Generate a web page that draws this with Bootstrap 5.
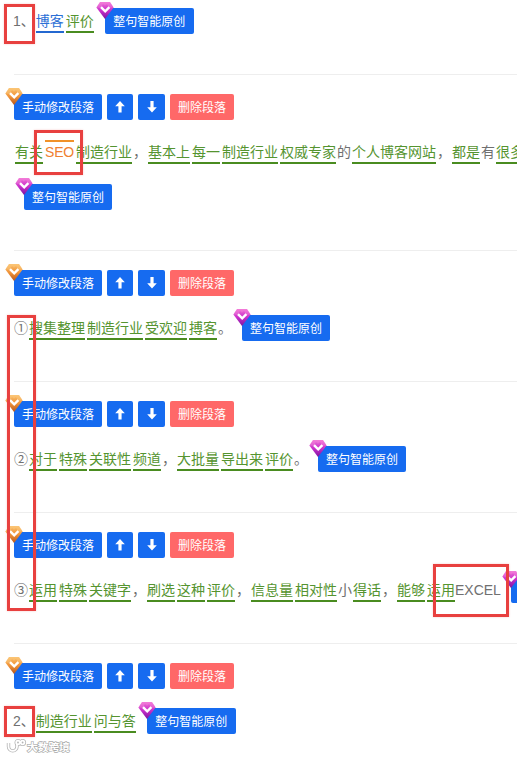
<!DOCTYPE html>
<html lang="zh-CN">
<head>
<meta charset="utf-8">
<meta name="viewport" content="width=device-width, initial-scale=1">
<title>段落编辑</title>
<link href="https://cdn.jsdelivr.net/npm/bootstrap@5.3.0/dist/css/bootstrap.min.css" rel="stylesheet">
<style>
body{width:517px;height:758px;font:400 14px/26px "Liberation Sans","Noto Sans CJK SC",sans-serif;color:#707070;background:#fff}
.para{padding:19px 0 40px;border-top:1px solid #eee;margin-left:14px}
.para.first{border-top:0;padding-top:8px}
.tools{gap:5px;margin-bottom:19px}
.line{height:26px;white-space:nowrap}
.line + .line{margin-top:19px}
.line > *{flex:none}
.num{margin-left:-1px}
.word{height:25px;margin:0 1px;color:#559430;border-bottom:2px solid #4a8c20}
.word.blue{color:#2b6fd6;border-color:#2468d0}
.word.orange{width:29px;letter-spacing:-.2px;color:#f08030;border:0;background:linear-gradient(#f0922a,#f0922a) 0 1px/100% 2px no-repeat}
.act{height:26px;padding:2px 8px 0;border:0;border-radius:2px;font-size:12px;line-height:24px;color:#fff;background:#166bf0}
.act:hover{color:#fff;background:#0d5fdd}
.act.del{background:#ff6868}
.act.arrow{width:26px;padding:0}
.act.arrow.down{width:27px}
.act.arrow svg{display:block;margin:auto}
.smart{margin-left:10px}
.num ~ .smart{width:89px}
.gem{left:-9px;top:-6px;width:18px;height:17px}
.frame{border:3px solid #e8403f;box-shadow:0 0 2px #e8403f44;pointer-events:none}
.f1{left:4px;top:4px;width:31px;height:40px}
.f2{left:34px;top:130px;width:49px;height:45px}
.f3{left:7px;top:315px;width:29px;height:296px}
.f4{left:433px;top:564px;width:76px;height:53px}
.f5{left:4px;top:706px;width:31px;height:31px}
.wm{left:6px;top:738px}
</style>
<script src="https://cdn.jsdelivr.net/npm/bootstrap@5.3.0/dist/js/bootstrap.bundle.min.js"></script>
</head>
<body class="position-relative overflow-hidden m-0">
<svg width="0" height="0" class="position-absolute">
  <defs>
    <linearGradient id="go" x2="0" y2="1"><stop stop-color="#f9bd68"/><stop offset=".5" stop-color="#f0943a"/><stop offset="1" stop-color="#b8561a"/></linearGradient>
    <linearGradient id="gp" x2="0" y2="1"><stop stop-color="#ee6fd4"/><stop offset=".5" stop-color="#c92fcb"/><stop offset="1" stop-color="#7a149f"/></linearGradient>
    <symbol id="gold" viewBox="0 0 18 17"><path d="M4 0h10l3.6 5.4L9 17 .4 5.4z" fill="url(#go)"/><path d="M4 0 .4 5.4l4.3.6L7 2l2 1.8L11 2l2.5 4 4.1-.6L14 0z" fill="#ffd28a" opacity=".4"/><path d="m5 5.2 4.2 4.2 4.2-4.2" fill="none" stroke="#fff" stroke-width="2.4"/></symbol>
    <symbol id="pink" viewBox="0 0 18 17"><path d="M4 0h10l3.6 5.4L9 17 .4 5.4z" fill="url(#gp)"/><path d="M4 0 .4 5.4l4.3.6L7 2l2 1.8L11 2l2.5 4 4.1-.6L14 0z" fill="#ff9ce0" opacity=".3"/><path d="m5 5.2 4.2 4.2 4.2-4.2" fill="none" stroke="#fff" stroke-width="2.4"/></symbol>
    <symbol id="up" viewBox="0 0 10 12"><path d="M5 0 .2 5.2h3.2V11.5h3.2V5.2h3.2z" fill="#fff"/></symbol>
    <symbol id="down" viewBox="0 0 10 12"><path d="M5 11.5.2 6.3h3.2V0h3.2v6.3h3.2z" fill="#fff"/></symbol>
  </defs>
</svg>

<section class="para first">
  <div class="line d-flex"><span class="num">1、</span><span class="word blue">博客</span><span class="word">评价</span><button class="btn act smart position-relative">整句智能原创<svg class="gem position-absolute"><use href="#pink"/></svg></button></div>
</section>

<section class="para">
  <div class="tools d-flex"><button class="btn act position-relative">手动修改段落<svg class="gem position-absolute"><use href="#gold"/></svg></button><button class="btn act arrow" aria-label="上移"><svg width="10" height="12"><use href="#up"/></svg></button><button class="btn act arrow down" aria-label="下移"><svg width="10" height="12"><use href="#down"/></svg></button><button class="btn act del">删除段落</button></div>
  <div class="line d-flex"><span class="word">有关</span><span class="word orange">SEO</span><span class="word">制造行业</span><span>，</span><span class="word">基本上</span><span class="word">每一</span><span class="word">制造行业</span><span class="word">权威专家</span><span>的</span><span class="word">个人博客网站</span><span>，</span><span class="word">都是</span><span>有</span><span class="word">很多</span></div>
  <div class="line d-flex"><button class="btn act smart position-relative">整句智能原创<svg class="gem position-absolute"><use href="#pink"/></svg></button></div>
</section>

<section class="para">
  <div class="tools d-flex"><button class="btn act position-relative">手动修改段落<svg class="gem position-absolute"><use href="#gold"/></svg></button><button class="btn act arrow" aria-label="上移"><svg width="10" height="12"><use href="#up"/></svg></button><button class="btn act arrow down" aria-label="下移"><svg width="10" height="12"><use href="#down"/></svg></button><button class="btn act del">删除段落</button></div>
  <div class="line d-flex"><span>①</span><span class="word">搜集整理</span><span class="word">制造行业</span><span class="word">受欢迎</span><span class="word">搏客</span><span>。</span><button class="btn act smart position-relative">整句智能原创<svg class="gem position-absolute"><use href="#pink"/></svg></button></div>
</section>

<section class="para">
  <div class="tools d-flex"><button class="btn act position-relative">手动修改段落<svg class="gem position-absolute"><use href="#gold"/></svg></button><button class="btn act arrow" aria-label="上移"><svg width="10" height="12"><use href="#up"/></svg></button><button class="btn act arrow down" aria-label="下移"><svg width="10" height="12"><use href="#down"/></svg></button><button class="btn act del">删除段落</button></div>
  <div class="line d-flex"><span>②</span><span class="word">对于</span><span class="word">特殊</span><span class="word">关联性</span><span class="word">频道</span><span>，</span><span class="word">大批量</span><span class="word">导出来</span><span class="word">评价</span><span>。</span><button class="btn act smart position-relative">整句智能原创<svg class="gem position-absolute"><use href="#pink"/></svg></button></div>
</section>

<section class="para">
  <div class="tools d-flex"><button class="btn act position-relative">手动修改段落<svg class="gem position-absolute"><use href="#gold"/></svg></button><button class="btn act arrow" aria-label="上移"><svg width="10" height="12"><use href="#up"/></svg></button><button class="btn act arrow down" aria-label="下移"><svg width="10" height="12"><use href="#down"/></svg></button><button class="btn act del">删除段落</button></div>
  <div class="line d-flex"><span>③</span><span class="word">运用</span><span class="word">特殊</span><span class="word">关键字</span><span>，</span><span class="word">刷选</span><span class="word">这种</span><span class="word">评价</span><span>，</span><span class="word">信息量</span><span class="word">相对性</span><span>小</span><span class="word">得话</span><span>，</span><span class="word">能够</span><span class="word me-0">运用</span><span>EXCEL</span><button class="btn act smart position-relative">整句智能原创<svg class="gem position-absolute"><use href="#pink"/></svg></button></div>
</section>

<section class="para">
  <div class="tools d-flex"><button class="btn act position-relative">手动修改段落<svg class="gem position-absolute"><use href="#gold"/></svg></button><button class="btn act arrow" aria-label="上移"><svg width="10" height="12"><use href="#up"/></svg></button><button class="btn act arrow down" aria-label="下移"><svg width="10" height="12"><use href="#down"/></svg></button><button class="btn act del">删除段落</button></div>
  <div class="line d-flex"><span class="num">2、</span><span class="word">制造行业</span><span class="word">问与答</span><button class="btn act smart position-relative">整句智能原创<svg class="gem position-absolute"><use href="#pink"/></svg></button></div>
</section>

<div class="frame f1 position-absolute"></div>
<div class="frame f2 position-absolute"></div>
<div class="frame f3 position-absolute"></div>
<div class="frame f4 position-absolute"></div>
<div class="frame f5 position-absolute"></div>

<svg class="wm position-absolute" width="66" height="18">
  <g fill="none" stroke="#b5b5b5" stroke-width="3.4"><path d="M2.5 5v3.5a4 4 0 0 0 8.5 0V6"/><circle cx="12" cy="4.5" r="1.8"/><circle cx="16.6" cy="4.5" r="1.8"/></g>
  <g fill="none" stroke="#fff" stroke-width="1.8"><path d="M2.5 5v3.5a4 4 0 0 0 8.5 0V6"/><circle cx="12" cy="4.5" r="1.8"/><circle cx="16.6" cy="4.5" r="1.8"/></g>
  <text x="21" y="13" font-size="10.7" font-weight="700" fill="#fff" stroke="#aaa" stroke-width="1.3" paint-order="stroke">大数跨境</text>
</svg>
</body>
</html>
